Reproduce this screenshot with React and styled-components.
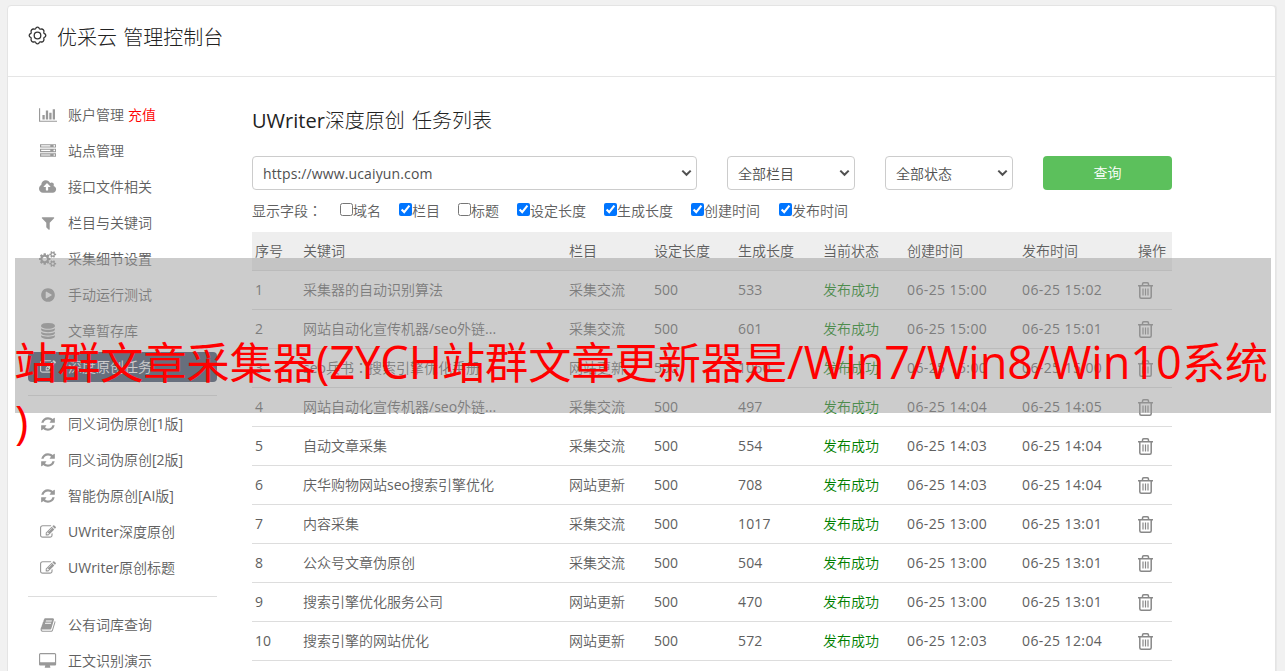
import React from "react";
import styled, { createGlobalStyle } from "styled-components";

const GlobalStyle = createGlobalStyle`
  * {
    box-sizing: border-box;
  }

  html, body, #root {
    height: 100%;
  }

  body {
    margin: 0;
    overflow: hidden;
    background: #f1f1f1;
    color: #606060;
    font: 350 14px/20px "Open Sans", "Noto Sans CJK SC", sans-serif;
  }
`;

const Page = styled.div`
  position: relative;
  height: 671px;
  padding: 5px 9px 0 7px;
  overflow: hidden;
`;

const Panel = styled.div`
  height: 720px;
  background: #fff;
  border: 1px solid #e4e4e4;
  border-radius: 4px;
  box-shadow: 1px 0 0 #e8e8e8;
`;

const Header = styled.header`
  display: flex;
  height: 71px;
  padding: 20px 20px 0;
  border-bottom: 1px solid #e5e5e5;
  color: #333;

  svg {
    margin-right: 10px;
  }
`;

const Brand = styled.h1`
  margin: 1px 0 0;
  font-size: 20px;
  line-height: 22px;
  font-weight: 300;
  color: #222;
  word-spacing: 1px;
`;

const Columns = styled.div`
  display: flex;
  padding: 23px 20px 0;
`;

const Menu = styled.nav`
  width: 189px;
  margin-right: 35px;
`;

const MenuItem = styled.a`
  display: flex;
  align-items: center;
  height: 30px;
  margin-bottom: 6px;
  padding-left: 10px;
  border-radius: 4px;
  white-space: nowrap;
  color: ${(p) => (p.$active ? "#fff" : "#606060")};
  background: ${(p) => (p.$active ? "#344560" : "transparent")};

  svg {
    flex: none;
    fill: ${(p) => (p.$active ? "#fff" : "#999")};
  }

  em {
    margin-left: 4px;
    font-style: normal;
    color: #f00;
  }
`;

const IconBox = styled.span`
  display: flex;
  justify-content: center;
  width: 20px;
  margin-right: 10px;
`;

const Divider = styled.hr`
  height: 1px;
  margin: 13px 0 13px;
  border: 0;
  background: #ddd;
`;

const Main = styled.main`
  width: 920px;
`;

const Title = styled.h2`
  margin: 10px 0 24px;
  font-size: 20px;
  line-height: 22px;
  font-weight: 300;
  color: #222;
  word-spacing: 2px;
`;

const Filters = styled.div`
  display: flex;
  gap: 30px;
`;

const Select = styled.div`
  display: flex;
  align-items: center;
  justify-content: space-between;
  width: ${(p) => p.$width}px;
  height: 34px;
  padding: 1px 4px 0 10px;
  border: 1px solid #ccc;
  border-radius: 4px;
  color: #505050;

  svg {
    margin-bottom: 2px;
  }
`;

const Button = styled.button`
  width: 129px;
  height: 34px;
  padding: 0;
  border: 0;
  border-radius: 4px;
  background: #5cc05c;
  color: #fff;
  font: inherit;
`;

const Fields = styled.div`
  display: flex;
  height: 42px;
  padding-top: 11px;
`;

const FieldsLabel = styled.span`
  width: 88px;
`;

const Colon = styled.span`
  font-family: "Noto Sans CJK TC", sans-serif;
  line-height: 1;
`;

const Field = styled.label`
  display: flex;
  margin-right: ${(p) => p.$gap}px;

  input {
    width: 13px;
    height: 13px;
    margin: 2px 0 0;
  }
`;

const Table = styled.table`
  width: 920px;
  table-layout: fixed;
  border-collapse: collapse;

  th {
    height: 38px;
    padding: 0 3px;
    text-align: left;
    font-weight: 350;
    background: #eee;
    border-bottom: 1px solid #ddd;
  }

  td {
    height: 39px;
    padding: 0 3px;
    border-bottom: 1px solid #ddd;
    white-space: nowrap;
  }

  th:last-child,
  td:last-child {
    padding-left: 4px;
    padding-right: 0;
  }

  svg {
    display: block;
    margin-top: 1px;
  }
`;

const Latin = styled.span`
  font-weight: 400;
  letter-spacing: ${(p) => p.$spacing || 0}px;
`;

const Status = styled.td`
  color: #008000;
`;

const Banner = styled.div`
  position: absolute;
  top: 258px;
  left: 15px;
  width: 1256px;
  height: 155px;
  padding-top: 75px;
  background: rgba(153, 153, 153, 0.5);
  color: #f00;
  font-size: 43.15px;
  font-weight: 400;
  line-height: 60px;
  text-indent: -1px;
  white-space: nowrap;

  ${Latin} {
    font-size: 45.1px;
    line-height: 1;
  }
`;

const icons = {
  chart: [
    2048,
    "M640 896v512h-256v-512h256zM1024 384v1024h-256v-1024h256zM2048 1536v128h-2048v-1536h128v1408h1920zM1408 640v768h-256v-768h256zM1792 256v1152h-256v-1152h256z",
  ],
  server: [
    1792,
    "M128 1408h1024v-128h-1024v128zm0-512h1024v-128h-1024v128zm1568 448q0-40-28-68t-68-28-68 28-28 68 28 68 68 28 68-28 28-68zm-1568-960h1024v-128h-1024v128zm1568 448q0-40-28-68t-68-28-68 28-28 68 28 68 68 28 68-28 28-68zm0-512q0-40-28-68t-68-28-68 28-28 68 28 68 68 28 68-28 28-68zm96 832v384h-1792v-384h1792zm0-512v384h-1792v-384h1792zm0-512v384h-1792v-384h1792z",
  ],
  cloud: [
    1920,
    "M1280 864q0-14-9-23l-352-352q-9-9-23-9t-23 9l-351 351q-10 12-10 24 0 14 9 23t23 9h224v352q0 13 9.5 22.5t22.5 9.5h192q13 0 22.5-9.5t9.5-22.5v-352h224q13 0 22.5-9.5t9.5-22.5zm640 288q0 159-112.5 271.5t-271.5 112.5h-1088q-185 0-316.5-131.5t-131.5-316.5q0-130 70-240t188-165q-2-30-2-43 0-212 150-362t362-150q156 0 285.5 87t188.5 231q71-62 166-62 106 0 181 75t75 181q0 76-41 138 130 31 213.5 135.5t83.5 238.5z",
  ],
  filter: [
    1792,
    "M1595 295q17 41-14 70l-493 493v742q0 42-39 59-13 5-25 5-27 0-45-19l-256-256q-19-19-19-45v-486l-493-493q-31-29-14-70 17-39 59-39h1280q42 0 59 39z",
  ],
  cogs: [
    1920,
    "M896 896q0-106-75-181t-181-75-181 75-75 181 75 181 181 75 181-75 75-181zm768 512q0-52-38-90t-90-38-90 38-38 90q0 53 37.5 90.5t90.5 37.5 90.5-37.5 37.5-90.5zm0-1024q0-52-38-90t-90-38-90 38-38 90q0 53 37.5 90.5t90.5 37.5 90.5-37.5 37.5-90.5zm-384 421v185q0 10-7 19.5t-16 10.5l-155 24q-11 35-32 76 34 48 90 115 7 11 7 20 0 12-7 19-23 30-82.5 89.5t-78.5 59.5q-11 0-21-7l-115-90q-37 19-77 31-11 108-23 155-7 24-30 24h-186q-11 0-20-7.5t-10-17.5l-23-153q-34-10-75-31l-118 89q-7 7-20 7-11 0-21-8-144-133-144-160 0-9 7-19 10-14 41-53t47-61q-23-44-35-82l-152-24q-10-1-17-9.5t-7-19.5v-185q0-10 7-19.5t16-10.5l155-24q11-35 32-76-34-48-90-115-7-11-7-20 0-12 7-20 22-30 82-89t79-59q11 0 21 7l115 90q34-18 77-32 11-108 23-154 7-24 30-24h186q11 0 20 7.5t10 17.5l23 153q34 10 75 31l118-89q8-7 20-7 11 0 21 8 144 133 144 160 0 8-7 19-12 16-42 54t-45 60q23 48 34 82l152 23q10 2 17 10.5t7 19.5zm640 533v140q0 16-149 31-12 27-30 52 51 113 51 138 0 4-4 7-122 71-124 71-8 0-46-47t-52-68q-20 2-30 2t-30-2q-14 21-52 68t-46 47q-2 0-124-71-4-3-4-7 0-25 51-138-18-25-30-52-149-15-149-31v-140q0-16 149-31 13-29 30-52-51-113-51-138 0-4 4-7 4-2 35-20t59-34 30-16q8 0 46 46.5t52 67.5q20-2 30-2t30 2q51-71 92-112l6-2q4 0 124 70 4 3 4 7 0 25-51 138 17 23 30 52 149 15 149 31zm0-1024v140q0 16-149 31-12 27-30 52 51 113 51 138 0 4-4 7-122 71-124 71-8 0-46-47t-52-68q-20 2-30 2t-30-2q-14 21-52 68t-46 47q-2 0-124-71-4-3-4-7 0-25 51-138-18-25-30-52-149-15-149-31v-140q0-16 149-31 13-29 30-52-51-113-51-138 0-4 4-7 4-2 35-20t59-34 30-16q8 0 46 46.5t52 67.5q20-2 30-2t30 2q51-71 92-112l6-2q4 0 124 70 4 3 4 7 0 25-51 138 17 23 30 52 149 15 149 31z",
  ],
  play: [
    1792,
    "M896 128q209 0 385.5 103t279.5 279.5 103 385.5-103 385.5-279.5 279.5-385.5 103-385.5-103-279.5-279.5-103-385.5 103-385.5 279.5-279.5 385.5-103zm384 823q32-18 32-55t-32-55l-544-320q-31-19-64-1-32 19-32 56v640q0 37 32 56 16 8 32 8 17 0 32-9z",
  ],
  database: [
    1792,
    "M896 768q237 0 443-43t325-127v170q0 69-103 128t-280 93.5-385 34.5-385-34.5-280-93.5-103-128v-170q119 84 325 127t443 43zm0 768q237 0 443-43t325-127v170q0 69-103 128t-280 93.5-385 34.5-385-34.5-280-93.5-103-128v-170q119 84 325 127t443 43zm0-384q237 0 443-43t325-127v170q0 69-103 128t-280 93.5-385 34.5-385-34.5-280-93.5-103-128v-170q119 84 325 127t443 43zm0-1152q208 0 385 34.5t280 93.5 103 128v128q0 69-103 128t-280 93.5-385 34.5-385-34.5-280-93.5-103-128v-128q0-69 103-128t280-93.5 385-34.5z",
  ],
  edit: [
    1792,
    "M888 1184l116-116-152-152-116 116v56h96v96h56zm440-720q-16-16-33 1l-350 350q-17 17-1 33t33-1l350-350q17-17 1-33zm80 594v190q0 119-84.5 203.5t-203.5 84.5h-832q-119 0-203.5-84.5t-84.5-203.5v-832q0-119 84.5-203.5t203.5-84.5h832q63 0 117 25 15 7 18 23 3 17-9 29l-49 49q-14 14-32 8-23-6-45-6h-832q-66 0-113 47t-47 113v832q0 66 47 113t113 47h832q66 0 113-47t47-113v-126q0-13 9-22l64-64q15-15 35-7t20 29zm-96-738l288 288-672 672h-288v-288zm444 132l-92 92-288-288 92-92q28-28 68-28t68 28l152 152q28 28 28 68t-28 68z",
  ],
  refresh: [
    1792,
    "M1639 1056q0 5-1 7-64 268-268 434.5t-478 166.5q-146 0-282.5-55t-243.5-157l-129 129q-19 19-45 19t-45-19-19-45v-448q0-26 19-45t45-19h448q26 0 45 19t19 45-19 45l-137 137q71 66 161 102t187 36q134 0 250-65t186-179q11-17 53-117 8-23 30-23h192q13 0 22.5 9.5t9.5 22.5zm25-800v448q0 26-19 45t-45 19h-448q-26 0-45-19t-19-45 19-45l138-138q-148-137-349-137-134 0-250 65t-186 179q-11 17-53 117-8 23-30 23h-199q-13 0-22.5-9.5t-9.5-22.5v-7q65-268 270-434.5t480-166.5q146 0 284 55.5t245 156.5l130-129q19-19 45-19t45 19 19 45z",
  ],
  book: [
    1792,
    "M1703 478q40 57 18 129l-275 906q-19 64-76.5 107.5t-122.5 43.5h-923q-77 0-148.5-53.5t-99.5-131.5q-24-67-2-127 0-4 3-27t4-37q1-8-3-21.5t-3-19.5q2-11 8-21t16.5-23.5 16.5-23.5q23-38 45-91.5t30-91.5q3-10 .5-30t-.5-28q3-11 17-28t17-23q21-36 42-92t25-90q1-9-2.5-32t.5-28q4-13 22-30.5t22-22.5q19-26 42.5-84.5t27.5-96.5q1-8-3-25.5t-2-26.5q2-8 9-18t18-23 17-21q8-12 16.5-30.5t15-35 16-36 19.5-32 26.5-23.5 36-11.5 47.5 5.5l-1 3q38-9 51-9h761q74 0 114 56t18 130l-274 906q-36 119-71.5 153.5t-128.5 34.5h-869q-27 0-38 15-11 16-1 43 24 70 144 70h923q29 0 56-15.5t35-41.5l300-987q7-22 5-57 38 15 59 43zm-1064 2q-4 13 2 22.5t20 9.5h608q13 0 25.5-9.5t16.5-22.5l21-64q4-13-2-22.5t-20-9.5h-608q-13 0-25.5 9.5t-16.5 22.5zm-83 256q-4 13 2 22.5t20 9.5h608q13 0 25.5-9.5t16.5-22.5l21-64q4-13-2-22.5t-20-9.5h-608q-13 0-25.5 9.5t-16.5 22.5z",
  ],
  desktop: [
    1920,
    "M1792 992v-832q0-13-9.5-22.5t-22.5-9.5h-1600q-13 0-22.5 9.5t-9.5 22.5v832q0 13 9.5 22.5t22.5 9.5h1600q13 0 22.5-9.5t9.5-22.5zm128-832v1088q0 66-47 113t-113 47h-544q0 37 16 77.5t32 71 16 43.5q0 26-19 45t-45 19h-512q-26 0-45-19t-19-45q0-14 16-44t32-70 16-78h-544q-66 0-113-47t-47-113v-1088q0-66 47-113t113-47h1600q66 0 113 47t47 113z",
  ],
};

const Icon = ({ name }) => {
  const [width, path] = icons[name];
  return (
    <svg width={width / 112} height="16" viewBox={`0 0 ${width} 1792`}>
      <path d={path} />
    </svg>
  );
};

// eight rounded lobes around a ring
const GearIcon = () => (
  <svg width="19" height="19" viewBox="0 0 19 19" fill="none" stroke="#333" strokeWidth="1.3">
    <path
      d="M7.7 2.6Q8 1.2 9.5 1.2T11.3 2.6Q11.5 3.3 12.6 3.2Q14.2 2.6 15.3 3.7T15.8 6.4Q15.7 7.3 16.4 7.7Q17.8 8.1 17.8 9.5T16.4 11.3Q15.7 11.7 15.8 12.6Q16.4 14.2 15.3 15.3T12.6 15.8Q11.5 15.7 11.3 16.4Q11 17.8 9.5 17.8T7.7 16.4Q7.5 15.7 6.4 15.8Q4.8 16.4 3.7 15.3T3.2 12.6Q3.3 11.7 2.6 11.3Q1.2 11 1.2 9.5T2.6 7.7Q3.3 7.3 3.2 6.4Q2.6 4.8 3.7 3.7T6.4 3.2Q7.5 3.3 7.7 2.6Z"
      strokeLinejoin="round"
    />
    <circle cx="9.5" cy="9.5" r="3.3" />
  </svg>
);

const TrashIcon = () => (
  <svg width="15" height="17" viewBox="0 0 15 17" fill="none" stroke="#888">
    <path
      d="M0 3.7h15M4.5 3.5v-1.5q0-1.2 1.2-1.2h3.6q1.2 0 1.2 1.2v1.5M1.8 4v10.7q0 1.5 1.5 1.5h8.4q1.5 0 1.5-1.5V4"
      strokeWidth="1.5"
    />
    <path d="M5 6.5v7M7.5 6.5v7M10 6.5v7" strokeWidth="1.2" />
  </svg>
);

const Chevron = () => (
  <svg width="11" height="8" viewBox="0 0 11 8" fill="none" stroke="#505050" strokeWidth="2">
    <path d="M1.3 1.6l4.2 4.2 4.2-4.2" />
  </svg>
);

// latin runs are a little heavier, full-width colons sit mid-cell
const mixed = (text) =>
  text.split(/([!-~]+|：)/).map((part, index) => {
    if (part === "：") return <Colon key={index}>{part}</Colon>;
    if (/^[!-~]/.test(part)) return <Latin key={index}>{part}</Latin>;
    return part;
  });

const menu = [
  ["chart", "账户管理", "充值"],
  ["server", "站点管理"],
  ["cloud", "接口文件相关"],
  ["filter", "栏目与关键词"],
  ["cogs", "采集细节设置"],
  ["play", "手动运行测试"],
  ["database", "文章暂存库"],
  ["edit", "深度原创任务"],
  null,
  ["refresh", "同义词伪原创[1版]"],
  ["refresh", "同义词伪原创[2版]"],
  ["refresh", "智能伪原创[AI版]"],
  ["edit", "UWriter深度原创"],
  ["edit", "UWriter原创标题"],
  null,
  ["book", "公有词库查询"],
  ["desktop", "正文识别演示"],
];

const fields = [
  ["域名", false, 18],
  ["栏目", true, 18],
  ["标题", false, 18],
  ["设定长度", true, 18],
  ["生成长度", true, 18],
  ["创建时间", true, 19],
  ["发布时间", true, 0],
];

const columns = [
  ["序号", 48],
  ["关键词", 266],
  ["栏目", 85],
  ["设定长度", 84],
  ["生成长度", 85],
  ["当前状态", 84],
  ["创建时间", 115],
  ["发布时间", 115],
  ["操作", 38],
];

const rows = [
  ["采集器的自动识别算法", "采集交流", 533, "15:00", "15:02"],
  ["网站自动化宣传机器/seo外链...", "采集交流", 601, "15:00", "15:01"],
  ["seo兵书：搜索引擎优化手册", "网站更新", 1060, "15:00", "15:00"],
  ["网站自动化宣传机器/seo外链...", "采集交流", 497, "14:04", "14:05"],
  ["自动文章采集", "采集交流", 554, "14:03", "14:04"],
  ["庆华购物网站seo搜索引擎优化", "网站更新", 708, "14:03", "14:04"],
  ["内容采集", "采集交流", 1017, "13:00", "13:01"],
  ["公众号文章伪原创", "采集交流", 504, "13:00", "13:01"],
  ["搜索引擎优化服务公司", "网站更新", 470, "13:00", "13:01"],
  ["搜索引擎的网站优化", "网站更新", 572, "12:03", "12:04"],
];

const App = () => (
  <Page>
    <GlobalStyle />
    <Panel>
      <Header>
        <GearIcon />
        <Brand>优采云 管理控制台</Brand>
      </Header>
      <Columns>
        <Menu>
          {menu.map((item, index) =>
            item ? (
              <MenuItem key={index} $active={item[1] === "深度原创任务"}>
                <IconBox>
                  <Icon name={item[0]} />
                </IconBox>
                {mixed(item[1])}
                {!!item[2] && <em>{item[2]}</em>}
              </MenuItem>
            ) : (
              <Divider key={index} />
            )
          )}
        </Menu>
        <Main>
          <Title>{mixed("UWriter深度原创 任务列表")}</Title>
          <Filters>
            <Select $width={445}>
              <Latin $spacing={0.13}>https://www.ucaiyun.com</Latin>
              <Chevron />
            </Select>
            <Select $width={128}>
              全部栏目
              <Chevron />
            </Select>
            <Select $width={128}>
              全部状态
              <Chevron />
            </Select>
            <Button>查询</Button>
          </Filters>
          <Fields>
            <FieldsLabel>{mixed("显示字段：")}</FieldsLabel>
            {fields.map(([label, checked, gap]) => (
              <Field key={label} $gap={gap}>
                <input type="checkbox" defaultChecked={checked} />
                {label}
              </Field>
            ))}
          </Fields>
          <Table>
            <colgroup>
              {columns.map(([label, width]) => (
                <col key={label} width={width} />
              ))}
            </colgroup>
            <thead>
              <tr>
                {columns.map(([label]) => (
                  <th key={label}>{label}</th>
                ))}
              </tr>
            </thead>
            <tbody>
              {rows.map(([keyword, column, length, created, published], index) => (
                <tr key={index}>
                  <td>
                    <Latin>{index + 1}</Latin>
                  </td>
                  <td>{mixed(keyword)}</td>
                  <td>{column}</td>
                  <td>
                    <Latin>500</Latin>
                  </td>
                  <td>
                    <Latin $spacing={0.15}>{length}</Latin>
                  </td>
                  <Status>发布成功</Status>
                  <td>
                    <Latin $spacing={0.4}>06-25 {created}</Latin>
                  </td>
                  <td>
                    <Latin $spacing={0.4}>06-25 {published}</Latin>
                  </td>
                  <td>
                    <TrashIcon />
                  </td>
                </tr>
              ))}
            </tbody>
          </Table>
        </Main>
      </Columns>
    </Panel>
    <Banner>
      {mixed("站群文章采集器(ZYCH站群文章更新器是/Win7/Win8/Win10系统")}
      <br />
      {mixed(")")}
    </Banner>
  </Page>
);

export default App;
